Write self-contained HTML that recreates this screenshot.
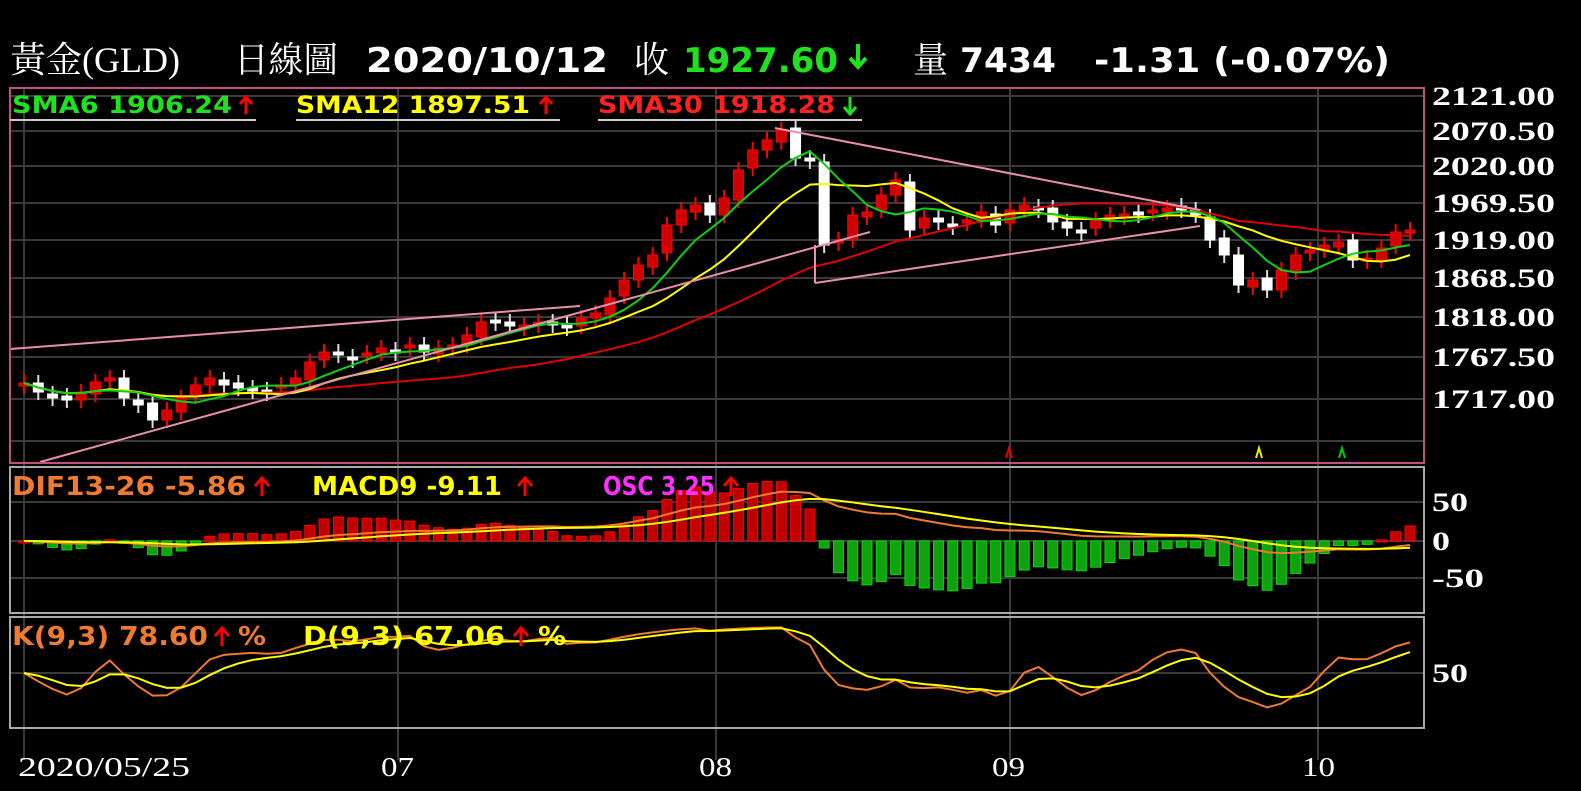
<!DOCTYPE html>
<html><head><meta charset="utf-8"><style>
html,body{margin:0;padding:0;background:#000;width:1581px;height:791px;overflow:hidden}
svg{display:block}
text{font-family:"DejaVu Sans","Liberation Sans","Noto Sans CJK TC",sans-serif}
.sf{font-family:"Liberation Serif","Noto Serif CJK TC",serif}
</style></head><body>
<svg id="s" width="1581" height="791" viewBox="0 0 1581 791">
<rect width="1581" height="791" fill="#000"/>
<!-- title -->
<text class="sf" x="10" y="72" fill="#fff" font-size="36" textLength="170" lengthAdjust="spacingAndGlyphs">黃金(GLD)</text>
<text class="sf" x="234" y="72" fill="#fff" font-size="36" textLength="104" lengthAdjust="spacingAndGlyphs">日線圖</text>
<text x="366" y="72" fill="#fff" font-size="34" font-weight="bold" textLength="242" lengthAdjust="spacingAndGlyphs">2020/10/12</text>
<text class="sf" x="634" y="72" fill="#fff" font-size="36" textLength="35" lengthAdjust="spacingAndGlyphs">收</text>
<text x="683" y="72" fill="#1fe21f" font-size="34" font-weight="bold" textLength="155" lengthAdjust="spacingAndGlyphs">1927.60</text>
<path d="M858 44v20M850 58l8 9 8-9" stroke="#1fe21f" stroke-width="4" fill="none"/>
<text class="sf" x="913" y="72" fill="#fff" font-size="36" textLength="35" lengthAdjust="spacingAndGlyphs">量</text>
<text x="960" y="72" fill="#fff" font-size="34" font-weight="bold" textLength="96" lengthAdjust="spacingAndGlyphs">7434</text>
<text x="1094" y="72" fill="#fff" font-size="34" font-weight="bold" textLength="296" lengthAdjust="spacingAndGlyphs">-1.31 (-0.07%)</text>
<!-- grids -->
<g stroke="#3a3a3a" stroke-width="2">
<line x1="10" y1="96" x2="1424" y2="96"/><line x1="10" y1="131" x2="1424" y2="131"/><line x1="10" y1="166" x2="1424" y2="166"/><line x1="10" y1="203" x2="1424" y2="203"/><line x1="10" y1="240" x2="1424" y2="240"/><line x1="10" y1="278" x2="1424" y2="278"/><line x1="10" y1="317" x2="1424" y2="317"/><line x1="10" y1="357" x2="1424" y2="357"/><line x1="10" y1="399" x2="1424" y2="399"/><line x1="10" y1="441" x2="1424" y2="441"/>
<line x1="10" y1="502" x2="1424" y2="502"/><line x1="10" y1="541" x2="1424" y2="541"/><line x1="10" y1="578" x2="1424" y2="578"/>
<line x1="10" y1="673" x2="1424" y2="673"/>
<line x1="24" y1="88" x2="24" y2="760"/><line x1="398" y1="88" x2="398" y2="760"/><line x1="716" y1="88" x2="716" y2="760"/><line x1="1010" y1="88" x2="1010" y2="760"/><line x1="1318" y1="88" x2="1318" y2="760"/>
</g>
<g id="g"></g>
<!-- trend lines -->
<g stroke="#e890a8" stroke-width="2" fill="none">
<line x1="10" y1="349" x2="580" y2="306"/>
<line x1="40" y1="462" x2="870" y2="232"/>
<line x1="775" y1="128" x2="1200" y2="210"/>
<line x1="815" y1="283" x2="1200" y2="226"/>
<line x1="815" y1="283" x2="815" y2="245"/>
</g>
<!-- panel borders -->
<rect x="10" y="88" width="1414" height="375" fill="none" stroke="#c05080" stroke-width="2"/>
<rect x="10" y="467" width="1414" height="146" fill="none" stroke="#aaa" stroke-width="2"/>
<rect x="10" y="617" width="1414" height="111" fill="none" stroke="#aaa" stroke-width="2"/>
<!-- small markers -->
<path d="M1006 458l3-10 3 10" stroke="#e00" fill="none" stroke-width="2"/>
<path d="M1256 458l3-10 3 10" stroke="#ee0" fill="none" stroke-width="2"/>
<path d="M1339 458l3-10 3 10" stroke="#0c0" fill="none" stroke-width="2"/>
<!-- legends -->
<g font-weight="bold" font-size="24">
<text x="12" y="113" fill="#1fe21f" textLength="220" lengthAdjust="spacingAndGlyphs">SMA6 1906.24</text>
<text x="296" y="113" fill="#ffff00" textLength="234" lengthAdjust="spacingAndGlyphs">SMA12 1897.51</text>
<text x="598" y="113" fill="#ff2020" textLength="237" lengthAdjust="spacingAndGlyphs">SMA30 1918.28</text>
</g>
<g stroke="#ccc" stroke-width="2"><line x1="10" y1="120" x2="256" y2="120"/><line x1="296" y1="120" x2="560" y2="120"/><line x1="598" y1="120" x2="862" y2="120"/></g>
<g stroke="#f00" stroke-width="3" fill="none">
<path d="M246 114v-15M240 104l6-7 6 7"/><path d="M546 114v-15M540 104l6-7 6 7"/><path d="M850 97v15M844 107l6 7 6-7" stroke="#1fe21f"/>
</g>
<g font-size="26" font-weight="bold">
<text x="12" y="495" fill="#ef7a30" textLength="234" lengthAdjust="spacingAndGlyphs">DIF13-26 -5.86</text>
<text x="312" y="495" fill="#ffff00" textLength="190" lengthAdjust="spacingAndGlyphs">MACD9 -9.11</text>
<text x="603" y="495" fill="#ff30ff" textLength="112" lengthAdjust="spacingAndGlyphs">OSC 3.25</text>
<text x="12" y="645" fill="#ef7a30" textLength="196" lengthAdjust="spacingAndGlyphs">K(9,3) 78.60</text>
<text x="303" y="645" fill="#ffff00" textLength="202" lengthAdjust="spacingAndGlyphs">D(9,3) 67.06</text>
<text x="238" y="645" fill="#ef7a30" textLength="28" lengthAdjust="spacingAndGlyphs">%</text>
<text x="538" y="645" fill="#ffff00" textLength="28" lengthAdjust="spacingAndGlyphs">%</text>
</g>
<g stroke="#f00" stroke-width="3" fill="none">
<path d="M262 496v-17M255 486l7-8 7 8"/><path d="M525 496v-17M518 486l7-8 7 8"/><path d="M731 496v-17M724 486l7-8 7 8"/>
<path d="M222 646v-17M215 636l7-8 7 8"/><path d="M521 646v-17M514 636l7-8 7 8"/>
</g>
<!-- axis -->
<g fill="#fff" font-size="26" font-weight="bold">
<text class="sf" x="1432" y="105" textLength="123" lengthAdjust="spacingAndGlyphs">2121.00</text>
<text class="sf" x="1432" y="140" textLength="123" lengthAdjust="spacingAndGlyphs">2070.50</text>
<text class="sf" x="1432" y="175" textLength="123" lengthAdjust="spacingAndGlyphs">2020.00</text>
<text class="sf" x="1432" y="212" textLength="123" lengthAdjust="spacingAndGlyphs">1969.50</text>
<text class="sf" x="1432" y="249" textLength="123" lengthAdjust="spacingAndGlyphs">1919.00</text>
<text class="sf" x="1432" y="287" textLength="123" lengthAdjust="spacingAndGlyphs">1868.50</text>
<text class="sf" x="1432" y="326" textLength="123" lengthAdjust="spacingAndGlyphs">1818.00</text>
<text class="sf" x="1432" y="366" textLength="123" lengthAdjust="spacingAndGlyphs">1767.50</text>
<text class="sf" x="1432" y="408" textLength="123" lengthAdjust="spacingAndGlyphs">1717.00</text>
<text class="sf" x="1432" y="511" textLength="36" lengthAdjust="spacingAndGlyphs">50</text>
<text class="sf" x="1432" y="550" textLength="18" lengthAdjust="spacingAndGlyphs">0</text>
<text class="sf" x="1432" y="587" textLength="52" lengthAdjust="spacingAndGlyphs">-50</text>
<text class="sf" x="1432" y="682" textLength="36" lengthAdjust="spacingAndGlyphs">50</text>
</g>
<g fill="#fff" font-size="27">
<text class="sf" x="18" y="776" textLength="172" lengthAdjust="spacingAndGlyphs">2020/05/25</text>
<text class="sf" x="381" y="776" textLength="33" lengthAdjust="spacingAndGlyphs">07</text>
<text class="sf" x="699" y="776" textLength="33" lengthAdjust="spacingAndGlyphs">08</text>
<text class="sf" x="992" y="776" textLength="33" lengthAdjust="spacingAndGlyphs">09</text>
<text class="sf" x="1302" y="776" textLength="33" lengthAdjust="spacingAndGlyphs">10</text>
</g>
</svg>
<script>
var C=[383,392,398,400,392,382,378,398,405,420,410,398,385,378,385,388,388,390,385,378,362,352,355,358,353,348,350,345,352,348,345,335,322,322,326,325,322,322,328,318,313,298,280,265,255,225,210,205,215,198,170,150,140,130,158,160,245,240,215,212,195,180,230,218,222,225,220,212,225,210,205,210,222,228,230,220,215,214,213,210,208,210,215,240,255,285,280,290,270,255,250,245,242,260,258,248,232,230];
var n=C.length,sp=(1410-24)/(n-1),g=document.getElementById('g'),h='';
function X(i){return 24+i*sp}
function P(y){return 2121-(y-96)/0.748}
for(var i=0;i<n;i++){var o=i?C[i-1]+(i%3-1)*2:C[i]+3,c=C[i],up=c<o,x=X(i);
var t=Math.min(o,c),b=Math.max(o,c);if(b-t<3)b=t+3;
var col=up?'#d00000':'#fff';
h+='<line x1="'+x+'" y1="'+(t-8)+'" x2="'+x+'" y2="'+(b+8)+'" stroke="'+(up?'#f00':'#ddd')+'" stroke-width="2"/>';
h+='<rect x="'+(x-5)+'" y="'+t+'" width="10" height="'+(b-t)+'" fill="'+col+'" stroke="'+(up?'#f00':'#fff')+'"/>';}
function sma(k){var r=[];for(var i=0;i<n;i++){var s=0,m=0;for(var j=Math.max(0,i-k+1);j<=i;j++){s+=C[j];m++}r.push(s/m)}return r}
function pl(a,col,f){var p=[];for(var i=0;i<n;i++)if(a[i]!=null)p.push(X(i)+','+f(a[i]));return '<polyline points="'+p.join(' ')+'" fill="none" stroke="'+col+'" stroke-width="2"/>'}
var id=function(v){return v};
h+=pl(sma(30),'#e00000',id)+pl(sma(12),'#ffff00',id)+pl(sma(6),'#10d010',id);
var pr=C.map(P),e13=pr[0],e26=pr[0],dif=[],mac=[],m=0;
for(i=0;i<n;i++){e13+=(pr[i]-e13)*2/14;e26+=(pr[i]-e26)*2/27;var d=e13-e26;m=i?m+(d-m)*0.2:d;dif.push(d);mac.push(m)}
var my=function(v){return 541-v*0.78};
for(i=0;i<n;i++){var o=dif[i]-mac[i],x=X(i),y0=541,y1=my(o*5.5);y1=Math.max(474,Math.min(605,y1));var up=o>=0;
h+='<rect x="'+(x-5)+'" y="'+Math.min(y0,y1)+'" width="10" height="'+Math.max(2,Math.abs(y1-y0))+'" fill="'+(up?'#c00000':'#10a010')+'" stroke="'+(up?'#f00':'#0d0')+'"/>';}
h+=pl(dif,'#ef7a30',my)+pl(mac,'#ffff00',my);
var K=50,D=50,ka=[],da=[];
for(i=0;i<n;i++){var hi=-1e9,lo=1e9;for(var j=Math.max(0,i-8);j<=i;j++){hi=Math.max(hi,pr[j]+6);lo=Math.min(lo,pr[j]-6)}
var rsv=(pr[i]-lo)/(hi-lo)*100;K=K*2/3+rsv/3;D=D*2/3+K/3;ka.push(K);da.push(D)}
var ky=function(v){return 673-(v-50)*1.0};
h+=pl(ka,'#ef7a30',ky)+pl(da,'#ffff00',ky);
g.innerHTML=h;
</script>
</body></html>
